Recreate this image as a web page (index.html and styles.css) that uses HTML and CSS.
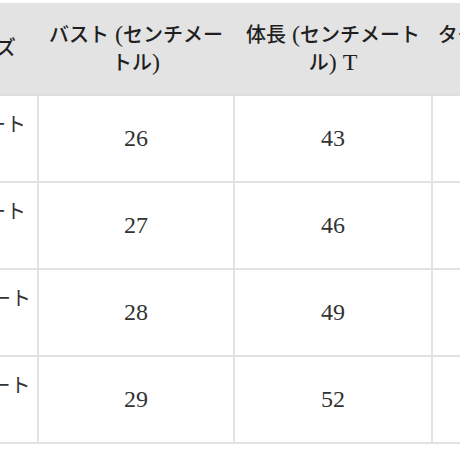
FILE: index.html
```html
<!DOCTYPE html>
<html lang="ja">
<head>
<meta charset="utf-8">
<title>サイズ表</title>
<link rel="stylesheet" href="styles.css">
</head>
<body>
<div class="table-wrap">
  <table class="size-table">
    <colgroup>
      <col class="c1"><col class="c2"><col class="c3"><col class="c4">
    </colgroup>
    <thead>
      <tr>
        <th class="first">子供の身長サイズ</th>
        <th>バスト<span class="lat"> (</span>センチメートル<span class="lat">)</span></th>
        <th>体長<span class="lat"> (</span>センチメートル<span class="lat">) T</span></th>
        <th class="last">タグサイズ センチメートル</th>
      </tr>
    </thead>
    <tbody>
      <tr><td class="first">身長80センチメートル</td><td class="num">26</td><td class="num">43</td><td class="num">80</td></tr>
      <tr><td class="first">身長90センチメートル</td><td class="num">27</td><td class="num">46</td><td class="num">90</td></tr>
      <tr><td class="first">身長100センチメートル</td><td class="num">28</td><td class="num">49</td><td class="num">100</td></tr>
      <tr><td class="first">身長110センチメートル</td><td class="num">29</td><td class="num">52</td><td class="num">110</td></tr>
    </tbody>
  </table>
</div>
</body>
</html>
```

FILE: styles.css
```css
html, body {
  margin: 0;
  padding: 0;
  background: #ffffff;
  overflow: hidden;
}

.table-wrap {
  padding-top: 3px;
  width: 460px;
  overflow: hidden;
}

.size-table {
  margin-left: -163px;
  border-collapse: collapse;
  table-layout: fixed;
  width: 790px;
  font-family: "Liberation Serif", "Noto Sans CJK JP", serif;
  font-size: 20px;
  line-height: 27px;
  color: #333333;
}

.c1 { width: 200px; }
.c2 { width: 196px; }
.c3 { width: 198px; }
.c4 { width: 196px; }

.size-table th {
  background: #e3e3e3;
  color: #1f1f1f;
  font-weight: 500;
  height: 92px;
  padding: 0 6px;
  box-sizing: border-box;
  text-align: center;
  vertical-align: middle;
  border: none;
  border-bottom: 2px solid #dedede;
}

.size-table td {
  height: 87px;
  padding: 0 6px;
  box-sizing: border-box;
  text-align: center;
  vertical-align: middle;
  border: 2px solid #e2e2e2;
  border-top: none;
}

.size-table .first {
  padding: 0 6px 0 2px;
}

.size-table th.last {
  padding: 0 4px;
}

.size-table .lat {
  font-size: 24px;
}

.size-table .num {
  font-size: 24px;
  color: #333333;
}
```
